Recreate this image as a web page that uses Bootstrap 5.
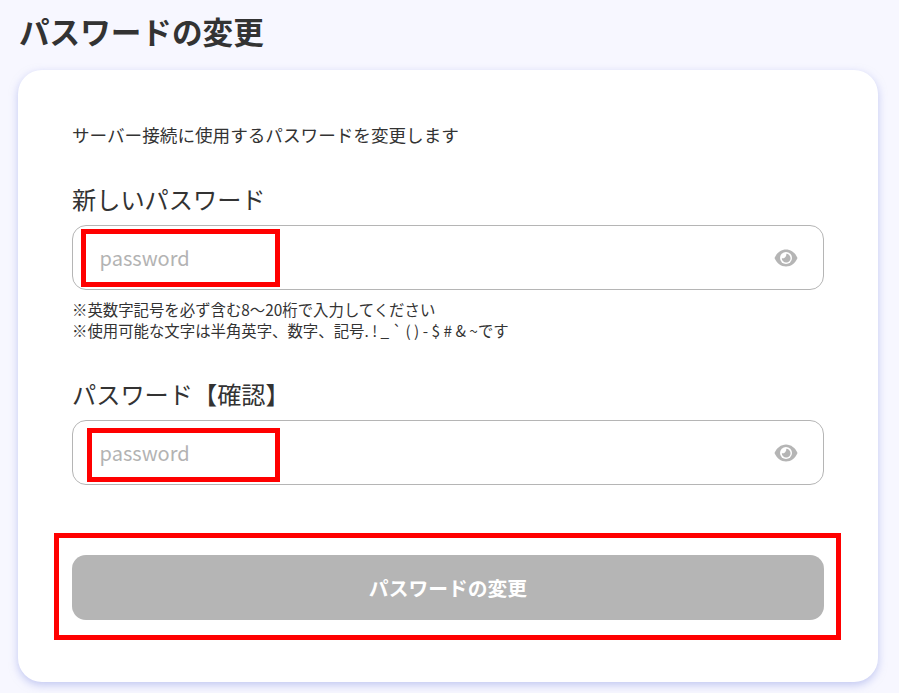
<!DOCTYPE html>
<html lang="ja">
<head>
<meta charset="utf-8">
<title>パスワードの変更</title>
<link href="https://cdn.jsdelivr.net/npm/bootstrap@5.3.0/dist/css/bootstrap.min.css" rel="stylesheet">
<style>
html,body{height:693px;overflow:hidden}
body{background:#f7f7ff;color:#333;font-family:"Noto Sans CJK JP","Noto Sans",sans-serif}
.page-wrap{padding:9px 21px 0 18px}
.page-title{font-size:30.6px;line-height:44px;font-weight:700;margin:0 0 17px 1px;color:#333}
.panel{background:#fff;border-radius:24px;height:612px;padding:53px 54px 0;box-shadow:0 3px 8px rgba(150,160,230,.55)}
.intro{font-size:17.6px;line-height:24px;margin:0 0 36px}
.field-label{font-size:24.2px;line-height:32px;margin:0 0 10px;display:block;color:#333}
.field-box{position:relative;height:65px;border:1px solid #b5b5b5;border-radius:14px;padding:0 25px 0 26.6px;background:#fff}
.field-box input{border:0;outline:0;flex:1;font-size:20px;color:#333;background:transparent;padding:0;min-width:0;font-family:inherit}
.field-box input::placeholder{color:#b3b3b3;opacity:1}
.hint{font-size:15.4px;line-height:21px;margin:9px 0 37px}
.submit-wrap{position:relative;margin-top:70px}
.submit-btn,.submit-btn:disabled{height:65px;width:100%;background:#b5b5b5;border:0;border-radius:14px;color:#fff;font-size:19.8px;font-weight:700;opacity:1}
.red-frame{position:absolute;border:5px solid #f00;pointer-events:none}
.frame-a{left:8px;top:3px;width:199px;height:58px}
.frame-b{left:14px;top:7px;width:193px;height:54px}
.frame-c{left:-18px;top:-22px;width:787px;height:107px}
</style>
</head>
<body>
<div class="page-wrap">
  <h1 class="page-title">パスワードの変更</h1>
  <div class="panel">
    <p class="intro">サーバー接続に使用するパスワードを変更します</p>
    <label class="field-label" for="p1">新しいパスワード</label>
    <div class="field-box d-flex align-items-center">
      <input id="p1" type="password" placeholder="password">
      <svg width="24" height="24" viewBox="0 0 24 24" aria-hidden="true"><path fill="#b5b5b5" d="M12 3.500C7 3.500 2.600 7 .5 12c2.100 5 6.500 8.500 11.500 8.500s9.400-3.500 11.500-8.500C21.400 7 17 3.500 12 3.500z"/><circle cx="12" cy="12" r="6" fill="#fff"/><path fill="#b5b5b5" d="M12.300 7.800a4.400 4.400 0 1 1-4.500 4.500 4 4 0 0 0 4.500-4.500z"/></svg>
      <div class="red-frame frame-a"></div>
    </div>
    <p class="hint">※英数字記号を必ず含む8～20桁で入力してください<br>※使用可能な文字は半角英字、数字、記号. ! _ ` ( ) - $ # &amp; ~です</p>
    <label class="field-label" for="p2">パスワード【確認】</label>
    <div class="field-box d-flex align-items-center">
      <input id="p2" type="password" placeholder="password">
      <svg width="24" height="24" viewBox="0 0 24 24" aria-hidden="true"><path fill="#b5b5b5" d="M12 3.500C7 3.500 2.600 7 .5 12c2.100 5 6.500 8.500 11.500 8.500s9.400-3.500 11.500-8.500C21.400 7 17 3.500 12 3.500z"/><circle cx="12" cy="12" r="6" fill="#fff"/><path fill="#b5b5b5" d="M12.300 7.800a4.400 4.400 0 1 1-4.500 4.500 4 4 0 0 0 4.500-4.500z"/></svg>
      <div class="red-frame frame-b"></div>
    </div>
    <div class="submit-wrap">
      <button type="button" class="btn submit-btn" disabled>パスワードの変更</button>
      <div class="red-frame frame-c"></div>
    </div>
  </div>
</div>
<script src="https://cdn.jsdelivr.net/npm/bootstrap@5.3.0/dist/js/bootstrap.bundle.min.js"></script>
</body>
</html>
